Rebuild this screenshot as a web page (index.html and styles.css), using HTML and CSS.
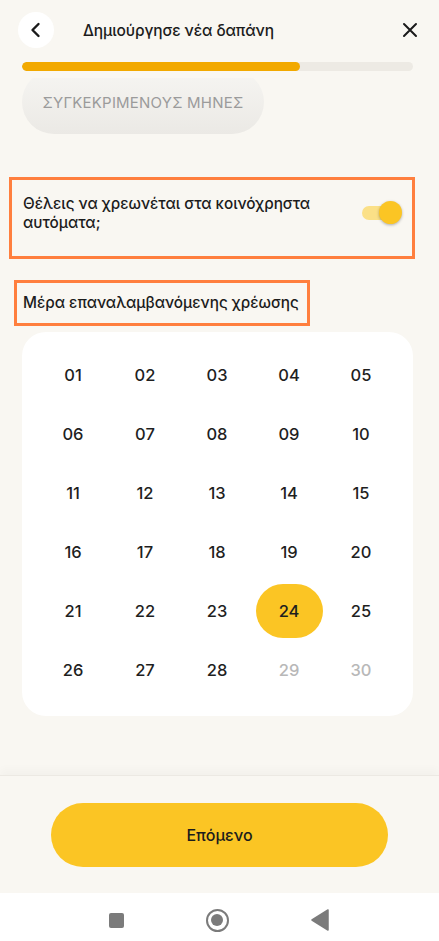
FILE: index.html
```html
<!DOCTYPE html>
<html lang="el">
<head>
    <meta charset="UTF-8">
    <meta name="viewport" content="width=device-width, initial-scale=1.0">
    <title>Νέα δαπάνη</title>
    <link rel="stylesheet" href="styles.css">
</head>
<body>
    <div class="screen">

        <div class="topbar">
            <button class="back_btn">
                <svg width="14" height="16" viewBox="0 0 14 16"><path d="M9.5 2 L3.5 8 L9.5 14" fill="none" stroke="#1a1a1a" stroke-width="2.4" stroke-linecap="round" stroke-linejoin="round"/></svg>
            </button>
            <h1 class="title">Δημιούργησε νέα δαπάνη</h1>
            <button class="close_btn">
                <svg width="16" height="16" viewBox="0 0 16 16"><path d="M2 2 L14 14 M14 2 L2 14" fill="none" stroke="#1a1a1a" stroke-width="2" stroke-linecap="round"/></svg>
            </button>
        </div>

        <div class="progress">
            <div class="progress-fill" style="width: 71%"></div>
        </div>

        <div class="content">
            <div class="chip">ΣΥΓΚΕΚΡΙΜΕΝΟΥΣ ΜΗΝΕΣ</div>

            <div class="auto_box">
                <p class="question">Θέλεις να χρεωνέται στα κοινόχρηστα αυτόματα;</p>
                <div class="toggle">
                    <span class="toggle-track"></span>
                    <span class="toggle-thumb"></span>
                </div>
            </div>

            <div class="day_label">Μέρα επαναλαμβανόμενης χρέωσης</div>

            <div class="calendar" id="calendar"></div>
        </div>

        <div class="footer">
            <button class="next_btn">Επόμενο</button>
        </div>

        <div class="navbar">
            <span class="nav-square"></span>
            <span class="nav-home"><span></span></span>
            <svg width="18" height="22" viewBox="0 0 18 22"><path d="M17 1 L17 21 L1 11 Z" fill="#7b7b7b" stroke="#7b7b7b" stroke-width="1.5" stroke-linejoin="round"/></svg>
        </div>

    </div>

    <script>
        var selected_day = 24;
        var last_day = 28;
        var cal = document.getElementById('calendar');

        for (let day = 1; day <= 30; day++) {
            let label = day < 10 ? '0' + day : '' + day;
            let cls = 'day';
            if (day == selected_day) cls += ' day-selected';
            if (day > last_day) cls += ' day-disabled';
            cal.innerHTML += `<div class="day-cell"><span class="${cls}">${label}</span></div>`;
        }
    </script>
</body>
</html>
```

FILE: styles.css
```css
*{
    margin: 0;
    padding: 0;
    box-sizing: border-box;
}
body{
    background-color: #f9f7f2;
    font-family: Inter, "Noto Sans", sans-serif;
    color: #1c1c1c;
}
button{
    border: none;
    background: none;
    font-family: inherit;
    cursor: pointer;
}
.screen{
    display: flex;
    flex-direction: column;
    height: 941px;
}

/* header */
.topbar{
    display: flex;
    align-items: center;
    height: 60px;
    padding: 0 17px 0 18px;
}
.back_btn{
    width: 36px;
    height: 36px;
    border-radius: 50%;
    background-color: #ffffff;
    display: flex;
    align-items: center;
    justify-content: center;
}
.title{
    flex: 1;
    margin-left: 29px;
    font-size: 15.5px;
    font-weight: 500;
    letter-spacing: -0.1px;
}
.close_btn{
    width: 24px;
    height: 24px;
    display: flex;
    align-items: center;
    justify-content: center;
}
.progress{
    margin: 2px 26px 0 22px;
    height: 9px;
    border-radius: 5px;
    background-color: #edeae4;
    overflow: hidden;
}
.progress-fill{
    height: 100%;
    border-radius: 5px;
    background-color: #f2a900;
}

/* scroll area */
.content{
    flex: 1;
    overflow: hidden;
    margin-top: 7px;
    padding: 0 26px 0 9px;
}
.chip{
    display: flex;
    align-items: center;
    justify-content: center;
    width: 242px;
    height: 64px;
    margin: -8px 0 0 13px;
    border-radius: 32px;
    background: linear-gradient(#f6f5f2, #ebe9e5);
    color: #9b9b9b;
    font-size: 15px;
    letter-spacing: 0.2px;
}
.auto_box{
    display: flex;
    align-items: flex-start;
    justify-content: space-between;
    height: 82px;
    margin-top: 43px;
    margin-right: -2px;
    padding: 14px 10px 0 11px;
    border: 3px solid #ff7f3e;
}
.question{
    width: 300px;
    font-size: 15.3px;
    font-weight: 500;
    line-height: 19px;
}
.toggle{
    position: relative;
    width: 40px;
    height: 24px;
    margin-top: 7px;
}
.toggle-track{
    position: absolute;
    left: 0;
    top: 5px;
    width: 38px;
    height: 14px;
    border-radius: 7px;
    background-color: #fbe087;
}
.toggle-thumb{
    position: absolute;
    right: 0;
    top: 0;
    width: 23px;
    height: 23px;
    border-radius: 50%;
    background-color: #fbc524;
    box-shadow: 0 1px 3px rgba(0,0,0,0.3);
}
.day_label{
    display: inline-block;
    margin: 21px 0 0 5px;
    padding: 10px 8px 10px 6px;
    border: 3px solid #ff7f3e;
    font-size: 15.3px;
    font-weight: 500;
    line-height: 20px;
}

/* calendar */
.calendar{
    display: grid;
    grid-template-columns: repeat(5, 72px);
    grid-auto-rows: 59px;
    width: 391px;
    margin: 6px 0 0 13px;
    padding: 13px 15px 17px 15px;
    border-radius: 24px;
    background-color: #ffffff;
}
.day-cell{
    display: flex;
    align-items: center;
    justify-content: center;
}
.day{
    display: flex;
    align-items: center;
    justify-content: center;
    width: 67px;
    height: 54px;
    border-radius: 27px;
    font-size: 16.5px;
    font-weight: 500;
    color: #1f1f1f;
}
.day-selected{
    background-color: #fbc524;
}
.day-disabled{
    color: #b8b8b8;
}

/* bottom */
.footer{
    height: 118px;
    padding-top: 27px;
    display: flex;
    justify-content: center;
    border-top: 1px solid #ece9e3;
    box-shadow: 0 -6px 8px rgba(0,0,0,0.025);
}
.next_btn{
    width: 337px;
    height: 64px;
    border-radius: 32px;
    background-color: #fbc524;
    color: #1c1c1c;
    font-size: 16px;
    font-weight: 500;
}
.navbar{
    height: 48px;
    background-color: #ffffff;
    display: flex;
    align-items: center;
    justify-content: center;
    gap: 82px;
    padding: 6px 2px 0 0;
}
.nav-square{
    width: 15px;
    height: 15px;
    border-radius: 2px;
    background-color: #7b7b7b;
}
.nav-home{
    width: 23px;
    height: 23px;
    border-radius: 50%;
    border: 2.5px solid #7b7b7b;
    display: flex;
    align-items: center;
    justify-content: center;
}
.nav-home span{
    width: 12px;
    height: 12px;
    border-radius: 50%;
    background-color: #7b7b7b;
}
```
